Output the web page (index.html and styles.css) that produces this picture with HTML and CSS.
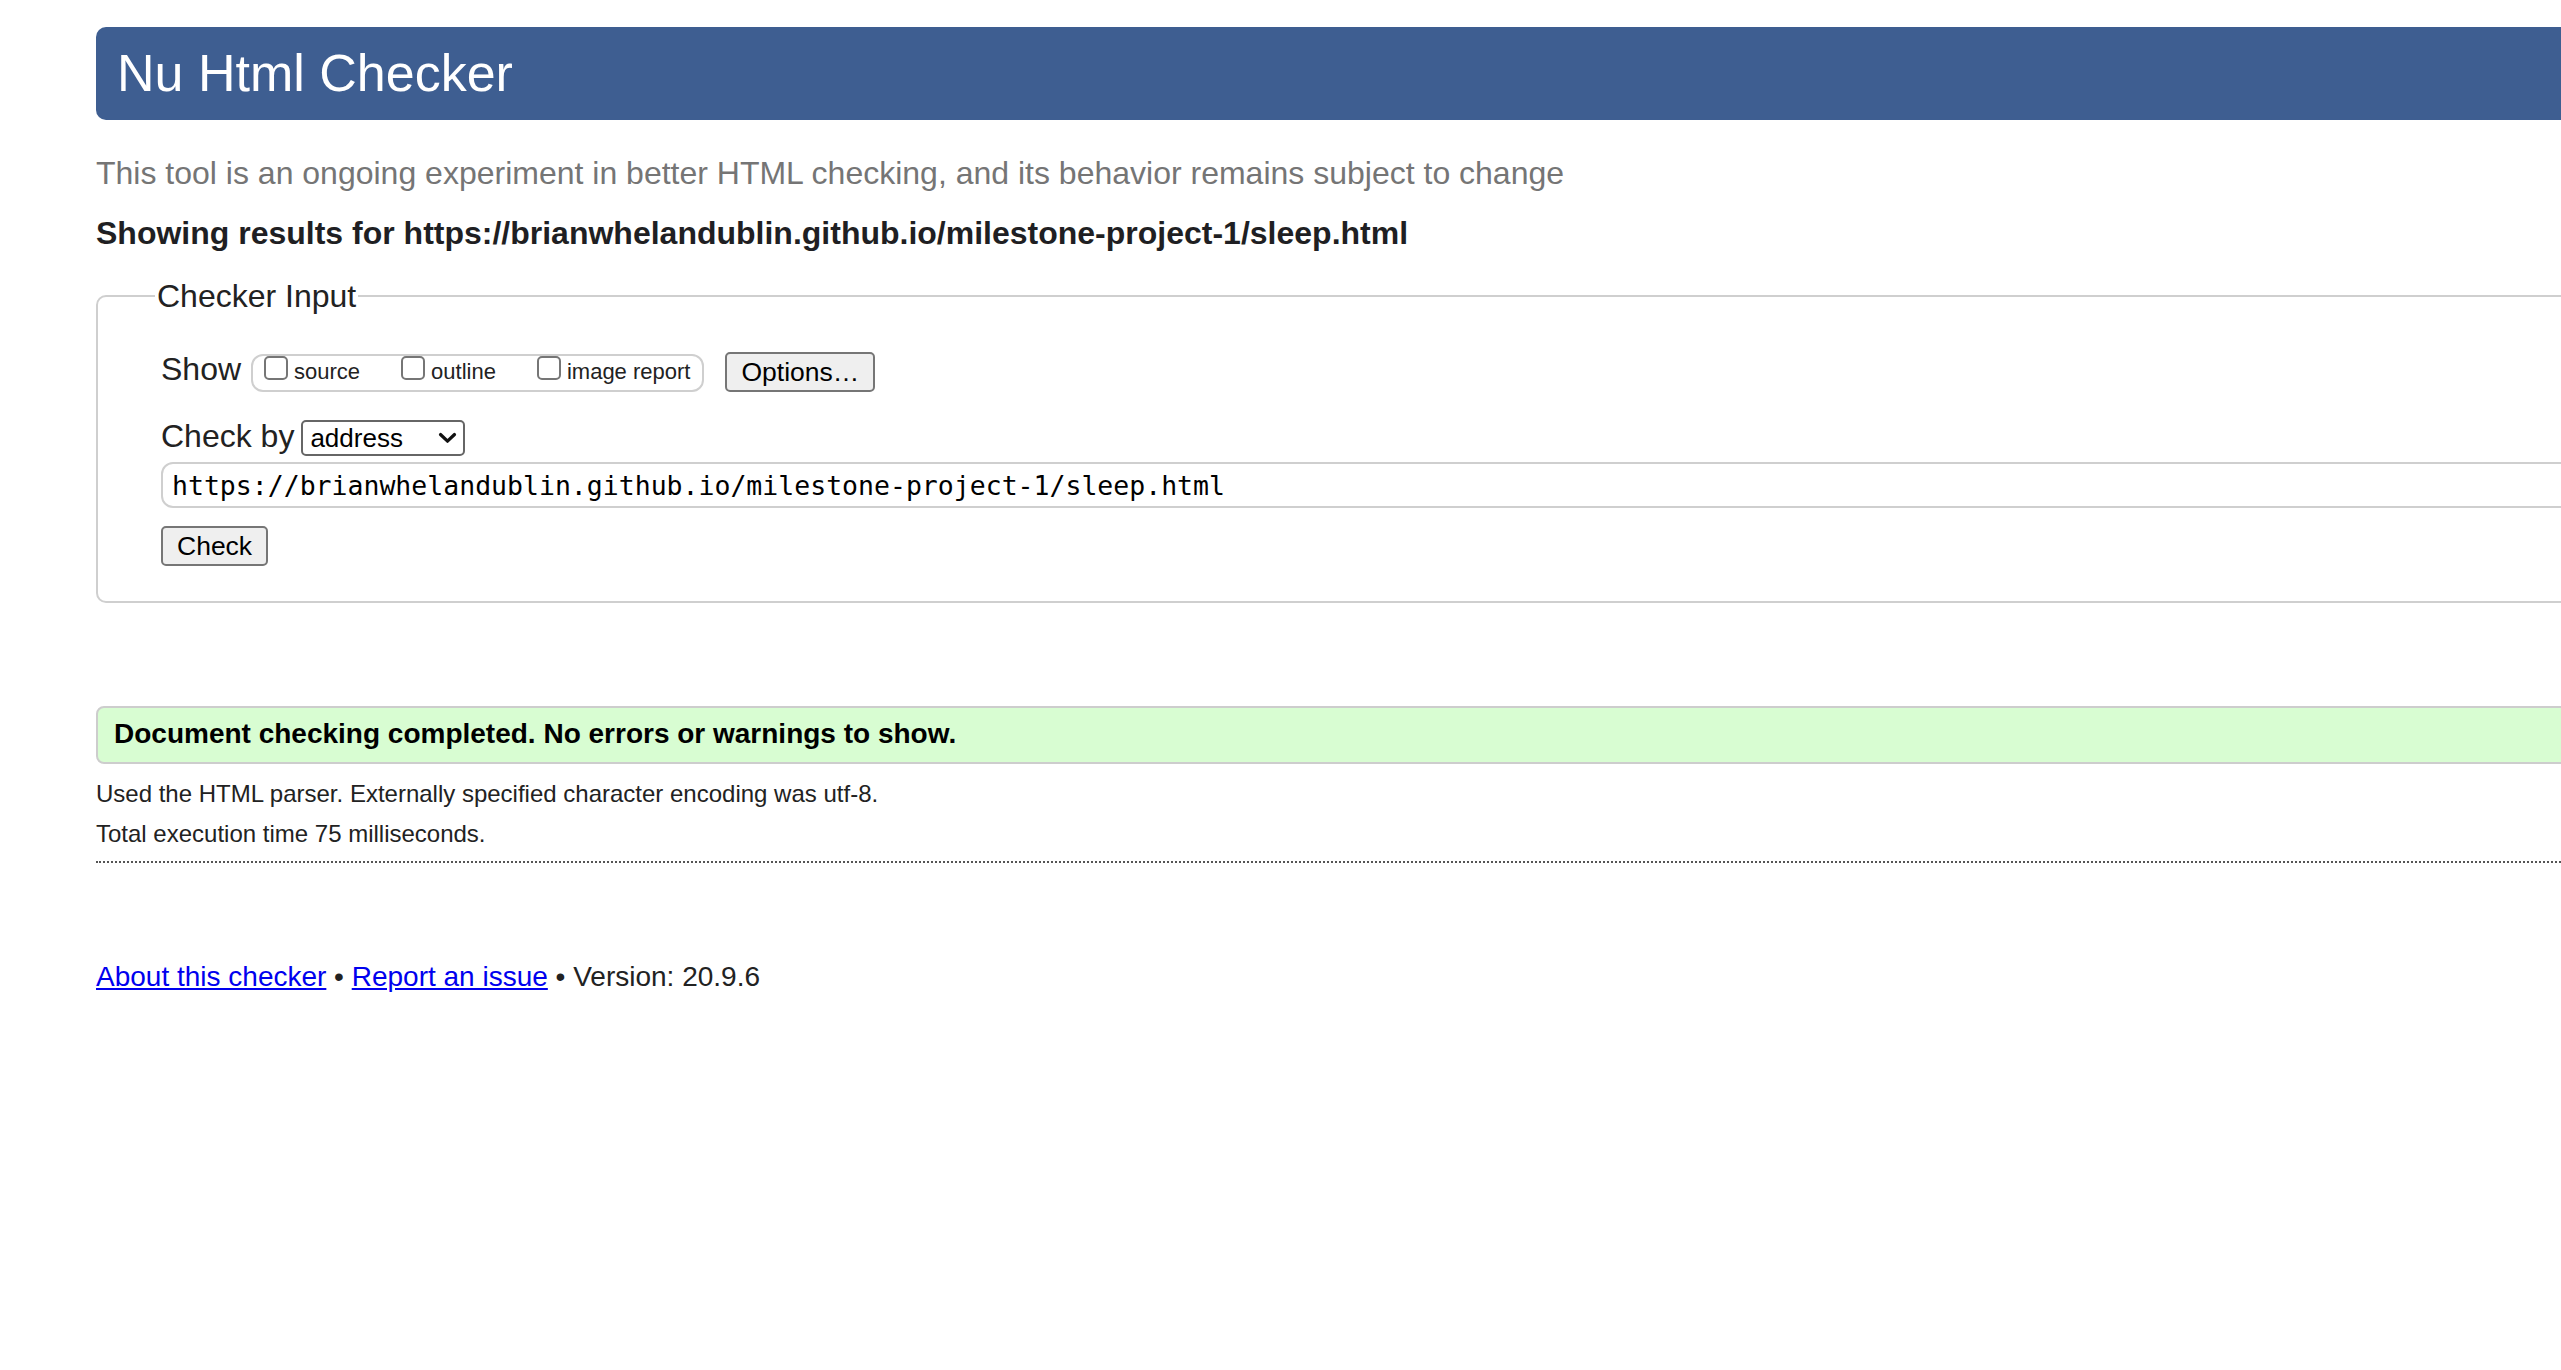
FILE: index.html
```html
<!DOCTYPE html>
<html lang="en">
<head>
<meta charset="utf-8">
<title>Showing results for https://brianwhelandublin.github.io/milestone-project-1/sleep.html - Nu Html Checker</title>
<link rel="stylesheet" href="styles.css">
</head>
<body>
<div class="page">
  <h1 class="banner">Nu Html Checker</h1>
  <p class="tagline">This tool is an ongoing experiment in better HTML checking, and its behavior remains subject to change</p>
  <p class="results-for">Showing results for https://brianwhelandublin.github.io/milestone-project-1/sleep.html</p>

  <form class="checker-form">
    <fieldset class="checker">
      <legend class="checker-legend">Checker Input</legend>
      <div class="row row-show">
        <span class="row-label show-label">Show</span>
        <div class="opts">
          <label class="opt"><input type="checkbox" class="cb"><span class="opt-text">source</span></label>
          <label class="opt"><input type="checkbox" class="cb"><span class="opt-text">outline</span></label>
          <label class="opt"><input type="checkbox" class="cb"><span class="opt-text">image report</span></label>
        </div>
        <button type="button" class="btn btn-options">Options…</button>
      </div>
      <div class="row row-by">
        <span class="row-label by-label">Check by</span>
        <div class="select">
          <select class="select-native"><option>address</option></select>
          <svg class="chevron" width="19" height="12" viewBox="0 0 19 12" aria-hidden="true"><path d="M2.5 2.5 L9.5 9.2 L16.5 2.5" fill="none" stroke="#111" stroke-width="3.2" stroke-linecap="round" stroke-linejoin="round"/></svg>
        </div>
      </div>
      <input class="url" type="text" value="https://brianwhelandublin.github.io/milestone-project-1/sleep.html">
      <button type="button" class="btn btn-check">Check</button>
    </fieldset>
  </form>

  <div class="success">Document checking completed. No errors or warnings to show.</div>
  <p class="details">Used the HTML parser. Externally specified character encoding was utf-8.</p>
  <p class="details details-next">Total execution time 75 milliseconds.</p>
  <hr class="rule">
  <p class="footer"><a href="#" class="flink">About this checker</a> • <a href="#" class="flink">Report an issue</a> • Version: 20.9.6</p>
</div>
</body>
</html>
```

FILE: styles.css
```css
html, body {
  margin: 0;
  padding: 0;
  overflow-x: hidden;
  background: #fff;
}

body {
  font-family: "Liberation Sans", Arial, Helvetica, sans-serif;
  color: #222;
}

.page {
  padding-top: 27px;
  margin-left: 96px;
  width: 2600px;
}

.banner {
  margin: 0;
  background: #3e5e91;
  color: #fff;
  font-size: 52px;
  font-weight: normal;
  line-height: 60px;
  padding: 16px 21px 17px;
  border-radius: 10px;
}

.tagline {
  margin: 35px 0 0;
  font-size: 32px;
  line-height: 36px;
  color: #757575;
}

.results-for {
  margin: 24px 0 0;
  font-size: 32px;
  line-height: 36px;
  font-weight: bold;
  color: #1f1f23;
}

.checker-form {
  margin: 27px 0 0;
}

.checker {
  margin: 0;
  border: 2px solid #cfcfcf;
  border-radius: 10px;
  padding: 38px 0 35px 63px;
  min-width: 0;
}

.checker-legend {
  margin-left: -6px;
  padding: 0 2px;
  font-size: 32px;
  line-height: 36px;
  color: #222;
}

.row {
  display: flex;
  align-items: flex-start;
}

.row-label {
  font-size: 32px;
  line-height: 36px;
  margin-top: -1px;
  color: #222;
}

.show-label {
  margin-right: 10px;
}

.opts {
  display: flex;
  align-items: flex-start;
  box-sizing: border-box;
  height: 38px;
  margin-top: 2px;
  padding: 0 12px 0 11px;
  border: 2px solid #cfcfcf;
  border-radius: 12px;
}

.opt {
  display: flex;
  align-items: flex-start;
}

.opt + .opt {
  margin-left: 41px;
}

.cb {
  appearance: none;
  -webkit-appearance: none;
  box-sizing: border-box;
  width: 24px;
  height: 24px;
  margin: 0;
  border: 2px solid #767676;
  border-radius: 5px;
  background: #fff;
}

.opt-text {
  margin-left: 6px;
  margin-top: 3px;
  font-size: 22px;
  line-height: 26px;
  color: #222;
}

.btn {
  appearance: none;
  -webkit-appearance: none;
  box-sizing: border-box;
  height: 40px;
  padding: 0 14px;
  border: 2px solid #767676;
  border-radius: 5px;
  background: #efefef;
  color: #000;
  font-family: "Liberation Sans", Arial, Helvetica, sans-serif;
  font-size: 26.5px;
  line-height: 36px;
}

.btn-options {
  margin-left: 21px;
}

.row-by {
  margin-top: 27px;
}

.by-label {
  margin-right: 7px;
}

.select {
  display: flex;
  align-items: center;
  justify-content: space-between;
  box-sizing: border-box;
  width: 164px;
  height: 36px;
  margin-top: 1px;
  padding: 0 6px 0 7px;
  border: 2px solid #666;
  border-radius: 5px;
  background: #fff;
}

.select-native {
  appearance: none;
  -webkit-appearance: none;
  border: none;
  background: transparent;
  padding: 0;
  margin: 0;
  font-family: "Liberation Sans", Arial, Helvetica, sans-serif;
  font-size: 26px;
  color: #000;
  outline: none;
}

.chevron {
  display: block;
  flex: none;
}

.url {
  display: block;
  box-sizing: border-box;
  width: 2500px;
  height: 46px;
  margin: 6px 0 0;
  padding: 0 9px;
  border: 2px solid #cfcfcf;
  border-radius: 12px;
  font-family: "DejaVu Sans Mono", "Liberation Mono", monospace;
  font-size: 26.5px;
  color: #000;
  background: #fff;
  outline: none;
}

.btn-check {
  display: block;
  margin-top: 18px;
}

.success {
  margin-top: 103px;
  padding: 11px 16px 13px;
  border: 2px solid #cdcdcd;
  border-radius: 8px;
  background: #d8fdd2;
  font-size: 28px;
  line-height: 30px;
  font-weight: bold;
  color: #000;
}

.details {
  margin: 15px 0 0;
  font-size: 24px;
  line-height: 29px;
  color: #222;
}

.details-next {
  margin-top: 11px;
}

.rule {
  margin: 13px 0 0;
  height: 0;
  border: none;
  border-top: 2px dotted #555;
}

.footer {
  margin: 98px 0 0;
  font-size: 28px;
  line-height: 32px;
  color: #222;
}

.flink {
  color: #0000ee;
}
```
